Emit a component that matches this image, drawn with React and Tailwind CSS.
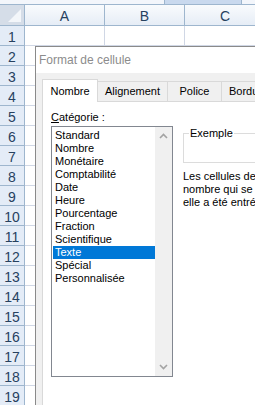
import React from "react";

const rows = Array.from({ length: 19 }, (_, i) => i + 1);
const items = [
  "Standard",
  "Nombre",
  "Monétaire",
  "Comptabilité",
  "Date",
  "Heure",
  "Pourcentage",
  "Fraction",
  "Scientifique",
  "Texte",
  "Spécial",
  "Personnalisée",
];

function Chevron({ down }) {
  return (
    <svg width="9" height="6" viewBox="0 0 9 6" className="block">
      <path
        d={down ? "M1 1 L4.5 4.5 L8 1" : "M1 5 L4.5 1.5 L8 5"}
        fill="none"
        stroke="#a3a3a3"
        strokeWidth="1.6"
      />
    </svg>
  );
}

export default function App() {
  return (
    <div
      className="relative w-[255px] h-[405px] overflow-hidden bg-white"
      style={{ fontFamily: "'Liberation Sans', Arial, sans-serif" }}
    >
      {/* top strip */}
      <div className="relative h-[5px] bg-[#f3f6fb] border-b border-[#9eb6ce]">
        <div className="absolute left-[164px] top-0 w-[78px] h-[4px] bg-[#c9d9ee] border-x border-[#9eb6ce]" />
      </div>
      {/* column header */}
      <div className="flex h-[21px] border-b border-[#9eb6ce] bg-gradient-to-b from-[#f9fbfd] to-[#e6edf6] text-[14px] text-[#27415f]">
        <div className="relative w-[25px] shrink-0 border-r border-[#9eb6ce] bg-[#d5dde8]">
          <div className="absolute right-[3px] bottom-[3px] w-0 h-0 border-l-[13px] border-l-transparent border-b-[13px] border-b-[#f3f6fa]" />
        </div>
        <div className="w-[80px] shrink-0 border-r border-[#9eb6ce] flex items-center justify-center pt-[2px]">A</div>
        <div className="w-[80px] shrink-0 border-r border-[#9eb6ce] flex items-center justify-center pt-[2px]">B</div>
        <div className="w-[80px] shrink-0 flex items-center justify-center pt-[2px]">C</div>
      </div>
      {/* rows */}
      {rows.map((r) => (
        <div key={r} className="flex h-[20px]">
          <div className="w-[25px] shrink-0 border-r border-b border-[#9eb6ce] bg-[#e4ecf7] text-[14px] text-[#27415f] flex items-center justify-center pt-[3px]">
            {r}
          </div>
          <div className="w-[80px] shrink-0 border-r border-b border-[#d0d7e5]" />
          <div className="w-[80px] shrink-0 border-r border-b border-[#d0d7e5]" />
          <div className="w-[80px] shrink-0 border-b border-[#d0d7e5]" />
        </div>
      ))}

      {/* dialog */}
      <div className="absolute left-[35px] top-[46px] w-[260px] h-[400px] border border-[#8a8a8a] bg-[#f0f0f0] text-[11px] text-black">
        <div className="h-[26px] bg-white flex items-center pl-[3px] text-[12px] text-[#8c8c8c]">
          Format de cellule
        </div>
        <div className="pl-[6px] pt-[6px]">
          {/* tabs */}
          <div className="flex items-end h-[22px]">
            <div className="relative z-10 h-[23px] w-[56px] bg-white border-x border-t border-[#d9d9d9] flex items-center justify-center -mb-[1px]">
              Nombre
            </div>
            <div className="h-[20px] w-[70px] border-t border-r border-[#d9d9d9] flex items-center justify-center">
              Alignement
            </div>
            <div className="h-[20px] w-[54px] border-t border-r border-[#d9d9d9] flex items-center justify-center">
              Police
            </div>
            <div className="h-[20px] w-[60px] border-t border-r border-[#d9d9d9] flex items-center pl-[7px]">
              Bordure
            </div>
          </div>
          {/* panel */}
          <div className="h-[320px] bg-white border border-[#d9d9d9] flex">
            <div className="pl-[8px] pt-[8px] w-[140px] shrink-0">
              <div className="h-[15px] leading-[15px]">
                <span className="underline">C</span>atégorie :
              </div>
              <div className="mt-[1px] w-[122px] h-[251px] border border-[#828790] flex">
                <div className="flex-1 pt-[2px] pl-[1px]">
                  {items.map((it) => (
                    <div
                      key={it}
                      className={
                        "h-[13px] leading-[13px] pl-[2px] whitespace-nowrap " +
                        (it === "Texte" ? "bg-[#0078d7] text-white" : "")
                      }
                    >
                      {it}
                    </div>
                  ))}
                </div>
                <div className="w-[17px] bg-[#f0f0f0] flex flex-col items-center justify-between pt-[6px] pb-[6px]">
                  <Chevron />
                  <Chevron down />
                </div>
              </div>
            </div>
            <div className="pt-[31px] flex-1 min-w-0">
              <div className="relative h-[30px] border border-[#dcdcdc] border-r-0">
                <div className="absolute left-[5px] -top-[8px] bg-white px-[1px] leading-[14px]">Exemple</div>
              </div>
              <div className="mt-[7px] leading-[13px] whitespace-nowrap overflow-hidden">
                <div>Les cellules de format Texte sont traitées comme du texte</div>
                <div>nombre qui se trouve dans la cellule. La cellule est</div>
                <div>elle a été entrée.</div>
              </div>
            </div>
          </div>
        </div>
      </div>
    </div>
  );
}
